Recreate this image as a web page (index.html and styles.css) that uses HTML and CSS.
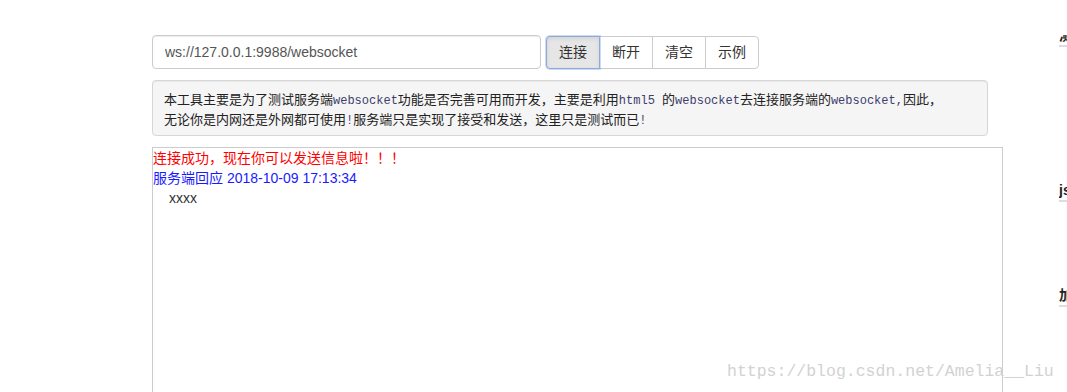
FILE: index.html
```html
<!DOCTYPE html>
<html lang="zh">
<head>
<meta charset="utf-8">
<title>websocket 测试工具</title>
<link rel="stylesheet" href="styles.css">
</head>
<body>
<div class="page">
  <main class="main">
    <div class="toolbar">
      <input class="url" type="text" value="ws://127.0.0.1:9988/websocket">
      <div class="btn-group">
        <button class="btn active">连接</button>
        <button class="btn">断开</button>
        <button class="btn">清空</button>
        <button class="btn">示例</button>
      </div>
    </div>
    <div class="info">
      本工具主要是为了测试服务端<span class="code">websocket</span>功能是否完善可用而开发，主要是利用<span class="code">html5 </span>的<span class="code">websocket</span>去连接服务端的<span class="code">websocket,</span>因此，<br>
      无论你是内网还是外网都可使用<span class="code">!</span>服务端只是实现了接受和发送，这里只是测试而已<span class="code">!</span>
    </div>
    <div class="messages">
      <div class="msg-ok">连接成功，现在你可以发送信息啦！！！</div>
      <div class="msg-server">服务端回应 2018-10-09 17:13:34</div>
      <div class="msg-body">xxxx</div>
    </div>
  </main>
  <aside class="side">
    <div class="side-title t1">测试</div>
    <div class="side-title t2">js</div>
    <div class="side-title t3">加密</div>
  </aside>
</div>
<div class="watermark">https://blog.csdn.net/Amelia__Liu</div>
</body>
</html>
```

FILE: styles.css
```css
html, body {
  margin: 0;
  padding: 0;
  height: 100%;
  overflow: hidden;
  background: #fff;
  font-family: "Liberation Sans", Arial, "Noto Sans CJK SC", sans-serif;
  font-size: 14px;
  color: #333;
}

.page {
  display: flex;
  padding-left: 152px;
  padding-top: 35px;
  gap: 56px;
}

.main {
  width: 851px;
  flex: none;
  display: flex;
  flex-direction: column;
}

.toolbar {
  display: flex;
  align-items: flex-start;
  gap: 5px;
}

.url {
  box-sizing: border-box;
  width: 389px;
  height: 34px;
  padding: 6px 12px;
  border: 1px solid #ccc;
  border-radius: 4px;
  font-family: "Liberation Sans", Arial, sans-serif;
  font-size: 14px;
  color: #555;
  box-shadow: inset 0 1px 1px rgba(0,0,0,.075);
  outline: none;
  margin: 0;
}

.btn-group {
  display: flex;
  margin-top: 1px;
}

.btn {
  box-sizing: border-box;
  height: 33px;
  padding: 0 12px;
  margin: 0;
  margin-left: -1px;
  border: 1px solid #ccc;
  background: #fff;
  color: #333;
  font-family: "Liberation Sans", Arial, "Noto Sans CJK SC", sans-serif;
  font-size: 14px;
  line-height: 31px;
  border-radius: 0;
}

.btn:first-child {
  margin-left: 0;
  border-radius: 4px 0 0 4px;
}

.btn:last-child {
  border-radius: 0 4px 4px 0;
  width: 54px;
}

.btn.active {
  background: #e6e6e6;
  border-color: #8fa9d8;
  box-shadow: inset 0 2px 4px rgba(0,0,0,.08), 0 0 0 1px rgba(102,150,233,.35);
  position: relative;
  z-index: 1;
}

.info {
  margin-top: 11px;
  width: 836px;
  height: 56px;
  box-sizing: border-box;
  padding: 9px 11px 0;
  background: #f5f5f5;
  border: 1px solid #d6d6d6;
  border-radius: 4px;
  font-family: "Noto Sans CJK SC", sans-serif;
  font-size: 13px;
  line-height: 17px;
  color: #222;
  box-shadow: inset 0 1px 1px rgba(0,0,0,.05);
}

.code {
  font-family: "Liberation Mono", "DejaVu Sans Mono", monospace;
  font-size: 12px;
  color: #3d3d6e;
}

.messages {
  margin-top: 11px;
  height: 300px;
  border: 1px solid #ccc;
  font-size: 14px;
  line-height: 20px;
}

.msg-ok {
  color: #f00;
}

.msg-server {
  color: #1a1aff;
}

.msg-body {
  padding-left: 16px;
  color: #333;
}

.side {
  flex: 1;
  min-width: 0;
  overflow: hidden;
  white-space: nowrap;
  height: 357px;
}

.side-title {
  font-weight: bold;
  font-size: 14px;
  line-height: 20px;
  color: #222;
  border-bottom: 2px solid #ddd;
  width: 40px;
}

.t1 { margin-top: -10px; }
.t2 { margin-top: 133px; }
.t3 { margin-top: 83px; }

.watermark {
  position: absolute;
  left: 727px;
  top: 362px;
  font-family: "Liberation Mono", "Courier New", monospace;
  font-size: 16.5px;
  line-height: 20px;
  color: #d2d2d2;
  white-space: nowrap;
}
```
